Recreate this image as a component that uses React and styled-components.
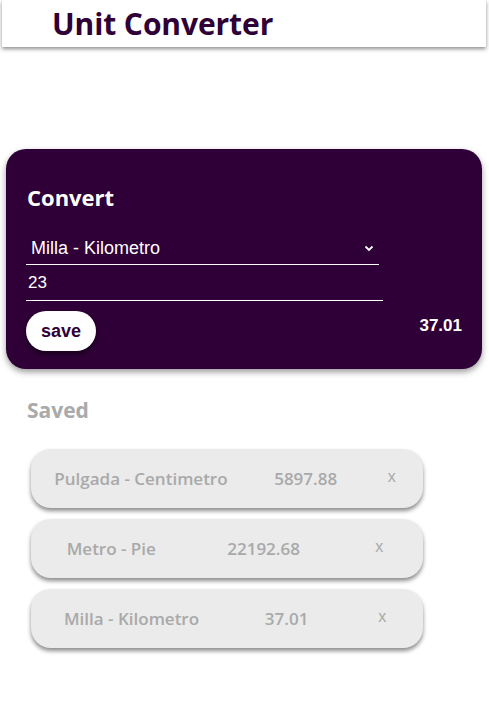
import React from 'react';
import styled, { createGlobalStyle } from 'styled-components';

const GlobalStyle = createGlobalStyle`
body {
  margin: 0;
  background: #fff;
  font-family: "Open Sans", "Noto Sans", sans-serif;
}
`

const Page = styled.div`
width: 489px;
min-height: 718px;
`

const Header = styled.header`
margin: 0 3px 0 2px;
height: 47px;
background: #fff;
box-shadow: 0 2px 4px rgba(0, 0, 0, 0.45);
display: flex;
align-items: center;
padding-left: 50px;
box-sizing: border-box;
`

const Title = styled.h1`
margin: 0;
font-size: 30px;
font-weight: 700;
color: #2e0036;
letter-spacing: -0.1px;
`

// card holding the converter form
const Card = styled.section`
margin: 102px 7px 0 6px;
height: 220px;
background: #2f0037;
border-radius: 20px;
box-shadow: 0 3px 6px rgba(0, 0, 0, 0.4);
padding: 33px 20px 0 20px;
box-sizing: border-box;
`

const CardTitle = styled.h2`
margin: 0 0 23px 1px;
font-size: 22px;
line-height: 30px;
font-weight: 700;
color: #fff;
`

const Form = styled.div`
display: flex;
flex-direction: column;
width: 357px;
`

const Select = styled.div`
display: flex;
align-items: center;
justify-content: space-between;
width: 353px;
height: 30px;
border-bottom: 1px solid #fff;
font-family: "Liberation Sans", Arial, sans-serif;
font-size: 18px;
color: #fff;
padding: 0 5px 3px 5px;
box-sizing: border-box;
`

const Input = styled.input`
width: 357px;
height: 36px;
background: transparent;
border: none;
border-bottom: 1px solid #fff;
color: #fff;
font-family: "Liberation Sans", Arial, sans-serif;
font-size: 17px;
padding: 0 2px;
box-sizing: border-box;
outline: none;
`

const BottomRow = styled.div`
display: flex;
align-items: flex-start;
justify-content: space-between;
margin-top: 10px;
`

const SaveButton = styled.button`
width: 70px;
height: 40px;
border: none;
border-radius: 20px;
background: #fff;
color: #2e0036;
font-family: "Liberation Sans", Arial, sans-serif;
font-weight: 700;
font-size: 18px;
box-shadow: 0 3px 5px rgba(0, 0, 0, 0.5);
`

const Result = styled.span`
font-family: "Liberation Sans", Arial, sans-serif;
font-weight: 700;
font-size: 17px;
color: #fff;
margin-top: 5px;
`

const SavedTitle = styled.h3`
margin: 27px 0 0 27px;
font-size: 21px;
line-height: 28px;
font-weight: 700;
color: #aaa;
`

const List = styled.ul`
list-style: none;
margin: 25px 0 0 31px;
padding: 0;
width: 392px;
display: flex;
flex-direction: column;
gap: 11px;
`

const Item = styled.li`
height: 59px;
display: flex;
align-items: center;
justify-content: space-around;
background: #ebebeb;
border-radius: 20px;
box-shadow: 0 3px 4px rgba(0, 0, 0, 0.45);
font-size: 17px;
font-weight: 600;
color: #a9a9a9;
`

const Remove = styled.button`
width: 16px;
border: none;
background: none;
padding: 0;
color: #a9a9a9;
font-family: "Liberation Sans", Arial, sans-serif;
font-size: 16px;
margin-top: -4px;
`

const saved = [
  { name: 'Pulgada - Centimetro', value: '5897.88' },
  { name: 'Metro - Pie', value: '22192.68' },
  { name: 'Milla - Kilometro', value: '37.01' },
];

export default function App() {
  return (
    <Page>
      <GlobalStyle />
      <Header>
        <Title>Unit Converter</Title>
      </Header>
      <Card>
        <CardTitle>Convert</CardTitle>
        <Form>
          <Select>
            <span>Milla - Kilometro</span>
            <svg width="10" height="7" viewBox="0 0 10 7">
              <path d="M1.5 1.5 L5 5 L8.5 1.5" fill="none" stroke="#fff" strokeWidth="1.8" />
            </svg>
          </Select>
          <Input defaultValue="23" />
        </Form>
        <BottomRow>
          <SaveButton>save</SaveButton>
          <Result>37.01</Result>
        </BottomRow>
      </Card>
      <SavedTitle>Saved</SavedTitle>
      <List>
        {saved.map(s => (
          <Item key={s.name}>
            <span>{s.name}</span>
            <span>{s.value}</span>
            <Remove>x</Remove>
          </Item>
        ))}
      </List>
    </Page>
  )
}
